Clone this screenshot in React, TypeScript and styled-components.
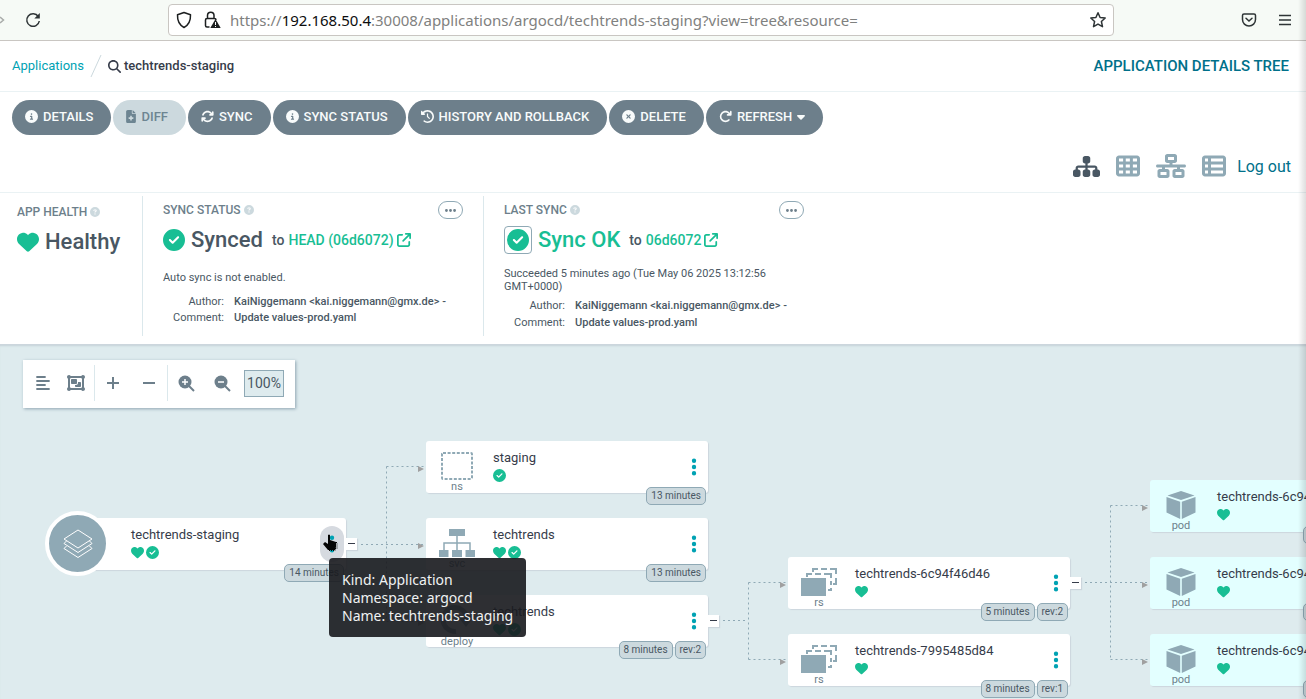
import React from 'react';
import styled, { createGlobalStyle } from 'styled-components';
import {
  FaCircleInfo, FaFileMedical, FaArrowsRotate, FaClockRotateLeft, FaCircleXmark, FaArrowRotateRight,
  FaCaretDown, FaSitemap, FaTableCells, FaNetworkWired, FaTableList, FaHeart, FaCircleCheck,
  FaArrowUpRightFromSquare, FaMagnifyingGlass, FaCircleQuestion, FaEllipsisVertical, FaEllipsis, FaObjectGroup,
} from 'react-icons/fa6';

const slate = '#6d7f8b';
const steel = '#8fa9b5';
const green = '#18be94';
const ink = '#495763';
const teal = '#00a2b3';
const mist = '#deebee';

const GlobalStyle = createGlobalStyle`
  * { box-sizing: border-box; }
  body { margin: 0; background: #fff; font-family: Roboto, sans-serif; color: ${ink}; overflow: hidden; }
  button { font-family: inherit; cursor: pointer; }
  a { text-decoration: none; }
  svg { display: block; flex: none; }
`;

const Page = styled.div`
  display: flex;
  flex-direction: column;
  height: 100vh;
  position: relative;
`;

const EdgeShade = styled.div`
  position: absolute;
  inset: 0 0 0 auto;
  width: 8px;
  background: linear-gradient(to right, rgba(0, 0, 0, 0), rgba(0, 0, 0, 0.13));
  pointer-events: none;
`;

/* Browser chrome */
const Chrome = styled.header`
  display: flex;
  align-items: center;
  height: 41px;
  flex: none;
  background: #f6faf6;
  border-bottom: 1px solid #c9c6c2;
`;

const ChromeButton = styled.button`
  display: flex;
  padding: 0;
  border: 0;
  background: none;
  color: #2e3436;
`;

const ChromeLeft = styled.div`
  display: flex;
  align-items: center;
  gap: 20px;
  width: 168px;
  flex: none;
`;

const ChromeRight = styled.div`
  display: flex;
  align-items: center;
  justify-content: flex-end;
  gap: 20px;
  width: 192px;
  flex: none;
  padding-right: 13px;
`;

const AddressBar = styled.div`
  display: flex;
  align-items: center;
  flex: 1;
  min-width: 0;
  height: 32px;
  padding: 0 6px;
  border: 1px solid #c9c6c2;
  border-radius: 4px;
  background: #fff;
`;

const BarIcons = styled.div`
  display: flex;
  gap: 10px;
  align-items: center;
  color: #1c1f20;
`;

const Url = styled.div`
  flex: 1;
  min-width: 0;
  padding-left: 9px;
  font: 15px/20px 'Noto Sans', sans-serif;
  white-space: nowrap;
  overflow: hidden;
  color: #7f8180;
  b { font-weight: 400; color: #0c0d0e; }
`;

/* Page header */
const Breadcrumbs = styled.nav`
  display: flex;
  align-items: center;
  height: 51px;
  flex: none;
  padding: 0 17px 0 12px;
  border-bottom: 1px solid #eaf2f4;
  font-size: 13px;
  line-height: 20px;
`;

const CrumbLink = styled.a`
  color: ${teal};
`;

const CurrentCrumb = styled.span`
  display: flex;
  align-items: center;
  gap: 3px;
  flex: 1;
  font-weight: 500;
  color: #363c4a;
`;

const PageTitle = styled.h1`
  margin: 0;
  font-size: 15px;
  line-height: 20px;
  font-weight: 500;
  color: #00708a;
`;

const Toolbar = styled.div`
  display: flex;
  gap: 2px;
  flex: none;
  padding: 8px 12px 0;
`;

const ActionButton = styled.button`
  display: flex;
  align-items: center;
  gap: 5px;
  height: 35px;
  padding: 0 18px 2px 13px;
  border: 0;
  border-radius: 18px;
  background: ${slate};
  color: #f8fbfb;
  font-size: 13px;
  font-weight: 500;
  white-space: nowrap;
  &:disabled { background: #ccd9de; color: #6d8592; }
`;

const DiffIcon = styled(FaFileMedical)`
  width: 10px;
`;

const CaretIcon = styled(FaCaretDown)`
  width: 8px;
`;

const ViewBar = styled.div`
  display: flex;
  align-items: center;
  justify-content: flex-end;
  gap: 16px;
  height: 58px;
  flex: none;
  padding: 6px 15px 0 0;
  border-bottom: 1px solid #eaf2f4;
`;

const ViewButton = styled.button<{ $active?: boolean }>`
  display: flex;
  padding: 0 0 1px;
  border: 0;
  background: none;
  color: ${(p) => (p.$active ? ink : steel)};
`;

const LogOut = styled.a`
  margin-left: -5px;
  font-size: 16px;
  line-height: 20px;
  color: #00708a;
`;

/* Status panel */
const StatusPanel = styled.section`
  display: flex;
  flex: none;
  height: 152px;
  padding: 3px 0 8px;
  border-bottom: 1px solid #ccd6dd;
`;

const StatusItem = styled.div<{ $width: number; $first?: boolean; $last?: boolean }>`
  width: ${(p) => p.$width}px;
  flex: none;
  padding: ${(p) => (p.$first ? '7px 17px 0' : '5px 20px 0')};
  border-right: ${(p) => (p.$last ? 0 : 1)}px solid #dbe8ec;
`;

const StatusHead = styled.div`
  display: flex;
  align-items: center;
  justify-content: space-between;
  height: 18px;
`;

const StatusLabel = styled.h2`
  display: flex;
  align-items: center;
  gap: 3px;
  margin: 0;
  font-size: 12px;
  line-height: 16px;
  font-weight: 500;
  color: ${slate};
  svg { color: #ccd9de; }
`;

const MoreButton = styled.button`
  display: flex;
  align-items: center;
  justify-content: center;
  width: 25px;
  height: 18px;
  padding: 0;
  border: 1px solid ${steel};
  border-radius: 9px;
  background: #fff;
  color: ${slate};
`;

const StatusValue = styled.div<{ $ok?: boolean }>`
  display: flex;
  align-items: center;
  height: 41px;
  gap: 6px;
  font-size: 22px;
  line-height: 29px;
  font-weight: 500;
  color: ${(p) => (p.$ok ? green : ink)};
  > svg { color: ${green}; }
`;

const BoxedIcon = styled.span`
  display: flex;
  padding: 2px;
  border: 1px solid ${steel};
  border-radius: 4px;
`;

const Revision = styled.span`
  display: flex;
  align-items: center;
  gap: 4px;
  margin-left: 3px;
  font-size: 14px;
  line-height: 20px;
  font-weight: 500;
  color: ${ink};
`;

const RevisionLink = styled.a`
  display: flex;
  align-items: center;
  gap: 3px;
  color: ${green};
`;

const Note = styled.p<{ $tall?: boolean }>`
  margin: 0;
  padding-top: ${(p) => (p.$tall ? 7 : 11)}px;
  font-size: 11px;
  line-height: 13px;
`;

const Facts = styled.dl<{ $tall?: boolean }>`
  display: grid;
  grid-template-columns: 61px 1fr;
  column-gap: 10px;
  margin: ${(p) => (p.$tall ? 4 : 10)}px -20px 0 0;
  font-size: 11px;
  line-height: ${(p) => (p.$tall ? 17 : 16)}px;
  dt { text-align: right; }
  dd { margin: 0; font-weight: 500; white-space: nowrap; }
`;

/* Resource tree */
const Canvas = styled.main`
  position: relative;
  flex: 1;
  min-height: 0;
  overflow: hidden;
  background: ${mist};
  box-shadow: inset 0 2px 2px -1px #c6d2d8;
`;

const Edges = styled.svg`
  position: absolute;
  left: 0;
  top: 0;
`;

const GraphTools = styled.div`
  position: absolute;
  left: 23px;
  top: 15px;
  display: flex;
  align-items: center;
  height: 48px;
  padding: 0 11px 2px 0;
  background: #fff;
  box-shadow: 1px 1px 3px #8fa4b1;
`;

const ToolGroup = styled.div<{ $tight?: boolean }>`
  display: flex;
  align-items: center;
  gap: ${(p) => (p.$tight ? 9 : 12)}px;
  height: 36px;
  width: ${(p) => (p.$tight ? 71 : 73)}px;
  padding-left: ${(p) => (p.$tight ? 8 : 6)}px;
  & + & { border-left: 1px solid #dbe8ec; }
`;

const ToolButton = styled.button`
  display: flex;
  justify-content: center;
  width: 24px;
  padding: 0;
  border: 0;
  background: none;
  color: ${slate};
`;

const ZoomLevel = styled.output`
  margin-left: 4px;
  width: 40px;
  height: 27px;
  border: 1px solid ${steel};
  background: ${mist};
  font-size: 14px;
  line-height: 25px;
  text-align: center;
`;

const Node = styled.article<{ $pod?: boolean }>`
  position: absolute;
  width: 282px;
  height: 52px;
  display: flex;
  border-radius: 3px;
  background: ${(p) => (p.$pod ? '#e3ffff' : '#fff')};
  box-shadow: 1px 1px 1px #ccd6dd;
`;

const NodeKind = styled.div`
  width: 62px;
  margin-right: 5px;
  flex: none;
  display: flex;
  flex-direction: column;
  align-items: center;
  padding-top: 9px;
  font-size: 11px;
  line-height: 12px;
  color: ${slate};
`;

const KindIcon = styled.span`
  display: flex;
  height: 33px;
  align-items: center;
`;

const AppBadge = styled.div`
  position: absolute;
  left: -19px;
  top: -7px;
  width: 65px;
  height: 65px;
  display: flex;
  align-items: center;
  justify-content: center;
  border: 4px solid #fff;
  border-radius: 50%;
  background: ${steel};
`;

const NodeBody = styled.div`
  flex: 1;
  min-width: 0;
  padding-top: 9px;
`;

const NodeName = styled.div`
  font-size: 13px;
  line-height: 16px;
  white-space: nowrap;
  color: #363c4a;
`;

const NodeState = styled.div`
  display: flex;
  gap: 2px;
  margin-top: 3px;
  color: ${green};
`;

const NodeMenu = styled.button<{ $hover?: boolean }>`
  display: flex;
  align-items: center;
  justify-content: center;
  width: 24px;
  height: 36px;
  margin: 8px 2px 0 0;
  padding: 0;
  border: 0;
  border-radius: 12px;
  background: ${(p) => (p.$hover ? '#d6dae0' : 'none')};
  color: ${teal};
`;

const Tags = styled.div`
  position: absolute;
  right: 2px;
  top: 46px;
  display: flex;
  gap: 2px;
`;

const Tag = styled.span`
  padding: 0 4px;
  border: 1px solid ${steel};
  border-radius: 5px;
  background: #ccd9de;
  font-size: 10px;
  line-height: 16px;
  white-space: nowrap;
  color: ${ink};
`;

const Collapse = styled.button`
  position: absolute;
  left: 282px;
  top: 20px;
  width: 11px;
  height: 12px;
  display: flex;
  align-items: center;
  justify-content: center;
  padding: 0;
  border: 0;
  background: #fff;
  box-shadow: 1px 1px 1px #ccd6dd;
`;

const Tooltip = styled.div`
  position: absolute;
  left: 329px;
  top: 213px;
  padding: 13px 13px 12px;
  border-radius: 4px;
  background: rgba(25, 26, 31, 0.91);
  color: #f0f2f2;
  font: 14px/18px 'Noto Sans', sans-serif;
  white-space: nowrap;
`;

const Pointer = styled.svg`
  position: absolute;
  left: 322px;
  top: 188px;
`;

const kindIcons: Record<string, React.ReactNode> = {
  ns: (
    <svg width="34" height="30" viewBox="0 0 34 30" fill="none" stroke={steel} strokeWidth="2">
      <rect x="2" y="2" width="30" height="26" rx="1" strokeDasharray="3 1.6" />
    </svg>
  ),
  svc: (
    <svg width="36" height="28" viewBox="0 0 36 28" fill={steel}>
      <path d="M10 0h16v7H10zM0 21h9.500v7H0zM13 21h10v7H13zM26.500 21H36v7h-9.500z" />
      <path d="M5 21v-7h26v7M18 7v14" fill="none" stroke={steel} strokeWidth="1.500" />
    </svg>
  ),
  deploy: (
    <svg width="34" height="32" viewBox="0 0 34 32" fill="none" stroke={steel} strokeWidth="5">
      <path d="M16 27.500A12 12 0 1 1 27 14" />
      <path d="M19 14h14l-7 9z" fill={steel} stroke="none" />
    </svg>
  ),
  rs: (
    <svg width="36" height="30" viewBox="0 0 36 30" fill="none" stroke={steel} strokeWidth="2">
      <rect x="0" y="11" width="25" height="18" fill={steel} stroke="none" />
      <path d="M6 10V7h5M14 7h6M23 7h7v4M30 14v4M30 21v2h-3" />
      <path d="M12 5V2h5M20 2h6M29 2h6v5M35 11v6h-3" />
    </svg>
  ),
  pod: (
    <svg width="30" height="30" viewBox="0 0 30 30" fill={steel}>
      <path d="M15 1l13.500 4.500L15 10 1.500 5.500zM.5 7l13.700 4.700v17.200L.5 22.500zM29.500 7l-13.700 4.700v17.200l13.700-6.400z" />
    </svg>
  ),
};

type TreeNode = {
  x: number; y: number; kind: string; name: string;
  state: ('health' | 'sync')[]; tags: string[]; collapse?: boolean;
};

const nodes: TreeNode[] = [
  { x: 64, y: 173, kind: 'app', name: 'techtrends-staging', state: ['health', 'sync'], tags: ['14 minutes'], collapse: true },
  { x: 426, y: 96, kind: 'ns', name: 'staging', state: ['sync'], tags: ['13 minutes'] },
  { x: 426, y: 173, kind: 'svc', name: 'techtrends', state: ['health', 'sync'], tags: ['13 minutes'] },
  { x: 426, y: 250, kind: 'deploy', name: 'techtrends', state: ['health', 'sync'], tags: ['8 minutes', 'rev:2'], collapse: true },
  { x: 788, y: 212, kind: 'rs', name: 'techtrends-6c94f46d46', state: ['health'], tags: ['5 minutes', 'rev:2'], collapse: true },
  { x: 788, y: 289, kind: 'rs', name: 'techtrends-7995485d84', state: ['health'], tags: ['8 minutes', 'rev:1'] },
  { x: 1150, y: 135, kind: 'pod', name: 'techtrends-6c94f46d46-4k2xn', state: ['health'], tags: ['5 minutes', 'running', '1/1'] },
  { x: 1150, y: 212, kind: 'pod', name: 'techtrends-6c94f46d46-9vq7c', state: ['health'], tags: ['5 minutes', 'running', '1/1'] },
  { x: 1150, y: 289, kind: 'pod', name: 'techtrends-6c94f46d46-tz5wl', state: ['health'], tags: ['5 minutes', 'running', '1/1'] },
];

const edgePaths = [
  'M346 199.500H426', 'M386.500 121.500V276.500', 'M386.500 121.500H426', 'M386.500 276.500H426',
  'M708 275.500H748', 'M748.500 237.500V314.500', 'M748.500 237.500H788', 'M748.500 314.500H788',
  'M1070 237.500H1150', 'M1110.500 160.500V314.500', 'M1110.500 160.500H1150', 'M1110.500 314.500H1150',
];
const arrows = [[418, 124], [418, 201], [418, 278], [780, 240], [780, 317], [1142, 163], [1142, 240], [1142, 317]];

function ResourceNode({ node }: { node: TreeNode }) {
  const app = node.kind === 'app';
  return (
    <Node $pod={node.kind === 'pod'} style={{ left: node.x, top: node.y }}>
      <NodeKind>
        {app ? (
          <AppBadge>
            <svg width="30" height="30" viewBox="0 0 30 30" fill="none" stroke="#fff" strokeWidth="1" strokeLinejoin="round">
              <path d="M15 1l14 9-14 9L1 10z" />
              <path d="M3.500 12L1 14.500l14 9 14-9-2.500-2.500" />
              <path d="M3.500 17L1 19.500l14 9 14-9-2.500-2.500" />
            </svg>
          </AppBadge>
        ) : (
          <><KindIcon>{kindIcons[node.kind]}</KindIcon>{node.kind}</>
        )}
      </NodeKind>
      <NodeBody>
        <NodeName>{node.name}</NodeName>
        <NodeState>
          {node.state.map((s) => (s === 'health' ? <FaHeart key={s} size={13} /> : <FaCircleCheck key={s} size={13} />))}
        </NodeState>
      </NodeBody>
      <NodeMenu $hover={app} aria-label="Resource actions"><FaEllipsisVertical size={20} /></NodeMenu>
      <Tags>{node.tags.map((t) => <Tag key={t}>{t}</Tag>)}</Tags>
      {node.collapse && (
        <Collapse aria-label="Collapse">
          <svg width="7" height="2"><rect width="7" height="1" fill="#363c4a" /></svg>
        </Collapse>
      )}
    </Node>
  );
}

function CommitFacts({ tall }: { tall?: boolean }) {
  return (
    <Facts $tall={tall}>
      <dt>Author:</dt><dd>KaiNiggemann &lt;kai.niggemann@gmx.de&gt; -</dd>
      <dt>Comment:</dt><dd>Update values-prod.yaml</dd>
    </Facts>
  );
}

export default function App() {
  return (
    <Page>
      <GlobalStyle />
      <Chrome>
        <ChromeLeft>
          <ChromeButton aria-label="Forward">
            <svg width="5" height="12" viewBox="0 0 5 12" fill="none" stroke="#a9acaa" strokeWidth="1.500"><path d="M0 3l3.500 3L0 9" /></svg>
          </ChromeButton>
          <ChromeButton aria-label="Reload">
            <svg width="16" height="16" viewBox="0 0 16 16" fill="none" stroke="currentColor" strokeWidth="1.500">
              <path d="M13.300 4.500A6.300 6.300 0 1 0 14.300 9" /><path d="M14.800 1v5.500H9.300z" fill="currentColor" stroke="none" />
            </svg>
          </ChromeButton>
        </ChromeLeft>
        <AddressBar>
          <BarIcons>
            <svg width="18" height="18" viewBox="0 0 18 18" fill="none" stroke="currentColor" strokeWidth="1.500" strokeLinejoin="round">
              <path d="M9 1.500l6.500 2.300c.2 5.200-1.300 10-6.500 12.700C3.800 13.800 2.300 9 2.500 3.800z" />
            </svg>
            <svg width="18" height="18" viewBox="0 0 18 18" fill="none" stroke="currentColor" strokeWidth="1.500">
              <path d="M4.500 7.500V4.500a3.200 3.200 0 0 1 6.500 0v3M6.500 16H4a1.500 1.500 0 0 1-1.500-1.500V9A1.500 1.500 0 0 1 4 7.500h7.500A1.500 1.500 0 0 1 13 9" />
              <path d="M12.500 8l5.200 9H7.300z" fill="currentColor" stroke="none" /><path d="M12.500 11v3M12.500 15v1" stroke="#fff" strokeWidth="1" />
            </svg>
          </BarIcons>
          <Url>https://<b>192.168.50.4</b>:30008/applications/argocd/techtrends-staging?view=tree&amp;resource=</Url>
          <ChromeButton aria-label="Bookmark">
            <svg width="18" height="18" viewBox="0 0 18 18" fill="none" stroke="currentColor" strokeWidth="1.500" strokeLinejoin="round">
              <path d="M9 1.800l2.100 4.700 5.100.5-3.800 3.500 1.100 5.200L9 13.100l-4.500 2.600 1.100-5.200L1.800 7l5.100-.5z" />
            </svg>
          </ChromeButton>
        </AddressBar>
        <ChromeRight>
          <ChromeButton aria-label="Save to Pocket">
            <svg width="16" height="16" viewBox="0 0 16 16" fill="none" stroke="currentColor" strokeWidth="1.500" strokeLinecap="round">
              <path d="M3 2h10a1.500 1.500 0 0 1 1.500 1.500V7.500a6.500 6.500 0 0 1-13 0V3.500A1.500 1.500 0 0 1 3 2z" /><path d="M5 6.200l3 2.800 3-2.800" />
            </svg>
          </ChromeButton>
          <ChromeButton aria-label="Menu">
            <svg width="16" height="14" viewBox="0 0 16 14" stroke="currentColor" strokeWidth="1.300"><path d="M2 2.500h12M2 7h12M2 11.500h12" /></svg>
          </ChromeButton>
        </ChromeRight>
      </Chrome>

      <Breadcrumbs>
        <CrumbLink href="#applications">Applications</CrumbLink>
        <svg width="24" height="24" viewBox="0 0 24 24" stroke="#ccd9de"><path d="M7 23L17 1" /></svg>
        <CurrentCrumb><FaMagnifyingGlass size={13} />techtrends-staging</CurrentCrumb>
        <PageTitle>APPLICATION DETAILS TREE</PageTitle>
      </Breadcrumbs>

      <Toolbar>
        <ActionButton><FaCircleInfo size={13} />DETAILS</ActionButton>
        <ActionButton disabled><DiffIcon size={13} />DIFF</ActionButton>
        <ActionButton><FaArrowsRotate size={13} />SYNC</ActionButton>
        <ActionButton><FaCircleInfo size={13} />SYNC STATUS</ActionButton>
        <ActionButton><FaClockRotateLeft size={13} />HISTORY AND ROLLBACK</ActionButton>
        <ActionButton><FaCircleXmark size={13} />DELETE</ActionButton>
        <ActionButton><FaArrowRotateRight size={13} />REFRESH <CaretIcon size={13} /></ActionButton>
      </Toolbar>

      <ViewBar>
        <ViewButton $active aria-label="Tree"><FaSitemap size={27} /></ViewButton>
        <ViewButton aria-label="Pods"><FaTableCells size={24} /></ViewButton>
        <ViewButton aria-label="Network"><FaNetworkWired size={30} /></ViewButton>
        <ViewButton aria-label="List"><FaTableList size={24} /></ViewButton>
        <LogOut href="#logout">Log out</LogOut>
      </ViewBar>

      <StatusPanel>
        <StatusItem $width={143} $first>
          <StatusHead>
            <StatusLabel>APP HEALTH<FaCircleQuestion size={10} /></StatusLabel>
          </StatusHead>
          <StatusValue><FaHeart size={22} />Healthy</StatusValue>
        </StatusItem>
        <StatusItem $width={341}>
          <StatusHead>
            <StatusLabel>SYNC STATUS<FaCircleQuestion size={10} /></StatusLabel>
            <MoreButton aria-label="More"><FaEllipsis size={13} /></MoreButton>
          </StatusHead>
          <StatusValue>
            <FaCircleCheck size={22} />Synced
            <Revision>to <RevisionLink href="#head">HEAD (06d6072)<FaArrowUpRightFromSquare size={14} /></RevisionLink></Revision>
          </StatusValue>
          <Note>Auto sync is not enabled.</Note>
          <CommitFacts />
        </StatusItem>
        <StatusItem $width={340} $last>
          <StatusHead>
            <StatusLabel>LAST SYNC<FaCircleQuestion size={10} /></StatusLabel>
            <MoreButton aria-label="More"><FaEllipsis size={13} /></MoreButton>
          </StatusHead>
          <StatusValue $ok>
            <BoxedIcon><FaCircleCheck size={22} /></BoxedIcon>Sync OK
            <Revision>to <RevisionLink href="#revision">06d6072<FaArrowUpRightFromSquare size={14} /></RevisionLink></Revision>
          </StatusValue>
          <Note $tall>Succeeded 5 minutes ago (Tue May 06 2025 13:12:56 GMT+0000)</Note>
          <CommitFacts tall />
        </StatusItem>
      </StatusPanel>

      <Canvas>
        <Edges width="1160" height="354" fill="none" stroke={steel} strokeDasharray="2 3">
          {edgePaths.map((d) => <path key={d} d={d} />)}
          {arrows.map(([x, y]) => <path key={`${x}-${y}`} d={`M${x} ${y - 3}l6 3-6 3z`} fill="#a0a0a0" stroke="none" />)}
        </Edges>
        {nodes.map((n) => <ResourceNode key={`${n.x}-${n.y}`} node={n} />)}
        <GraphTools>
          <ToolGroup $tight>
            <ToolButton aria-label="Align">
              <svg width="14" height="14" viewBox="0 0 14 14" stroke="currentColor" strokeWidth="1.800" strokeLinecap="round"><path d="M1 1h8M1 5h12M1 9h8M1 13h12" /></svg>
            </ToolButton>
            <ToolButton aria-label="Group nodes"><FaObjectGroup size={18} /></ToolButton>
          </ToolGroup>
          <ToolGroup>
            <ToolButton aria-label="Expand all"><svg width="14" height="14" stroke="currentColor" strokeWidth="2"><path d="M7 1v12M1 7h12" /></svg></ToolButton>
            <ToolButton aria-label="Collapse all"><svg width="14" height="14" stroke="currentColor" strokeWidth="2"><path d="M1 7h12" /></svg></ToolButton>
          </ToolGroup>
          <ToolGroup>
            {['M7 4v6M4 7h6', 'M4 7h6'].map((d, i) => (
              <ToolButton key={d} aria-label={i ? 'Zoom out' : 'Zoom in'}>
                <svg width="17" height="17" viewBox="0 0 17 17" strokeWidth="2"><circle cx="7" cy="7" r="6.500" fill={slate} /><path d="M10 10l6 6" stroke={slate} /><path d={d} stroke="#fff" strokeWidth="1.500" /></svg>
              </ToolButton>
            ))}
          </ToolGroup>
          <ZoomLevel>100%</ZoomLevel>
        </GraphTools>
        <Tooltip role="tooltip">Kind: Application<br />Namespace: argocd<br />Name: techtrends-staging</Tooltip>
        <Pointer width="17" height="19" viewBox="0 0 17 19">
          <path d="M6 2q1-1 2 0v5l6 2v5l-1 3H6l-5-6 2-2 3 2z" fill="#050505" />
          <path d="M8 9.500h7v6h-2v2H6" fill="none" stroke="#050505" strokeDasharray="1 1" />
        </Pointer>
      </Canvas>
      <EdgeShade />
    </Page>
  );
}
